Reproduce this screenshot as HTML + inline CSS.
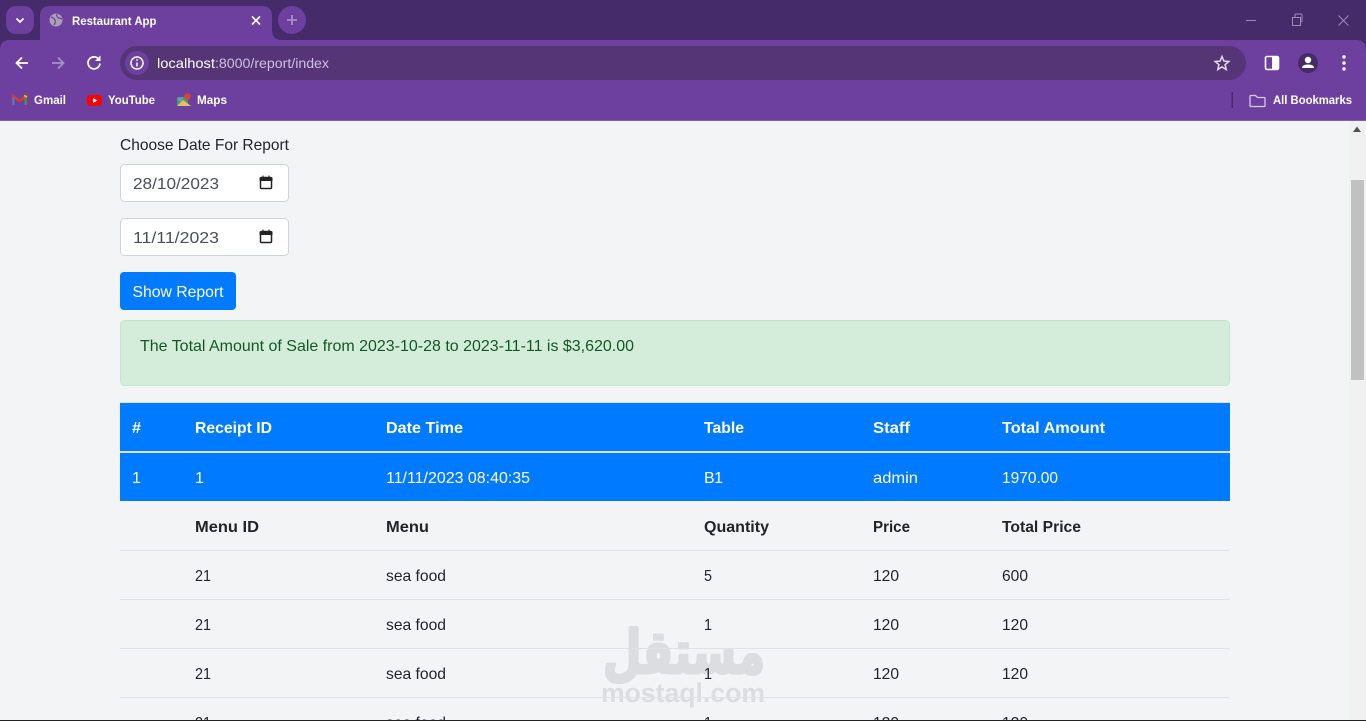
<!DOCTYPE html>
<html lang="en">
<head>
<meta charset="utf-8">
<title>Restaurant App</title>
<style>
html,body{margin:0;padding:0;width:1366px;height:721px;overflow:hidden;background:#f3f4f6}
svg{display:block;position:absolute;left:0;top:0}
text{font-family:"Liberation Sans",sans-serif;font-size:16px}
.d{fill:#212529}
.w{fill:#fff}
.b{font-weight:700}
.ui{font-size:12px;font-weight:700;fill:#fff}
</style>
</head>
<body>
<svg width="1366" height="721" viewBox="0 0 1366 721" xmlns="http://www.w3.org/2000/svg">
<!-- browser frame -->
<rect width="1366" height="121" fill="#452b69"/>
<rect y="40" width="1366" height="81" fill="#6d40a0"/>
<path d="M0 50Q0 40 10 40H30Q40 40 40 30V16Q40 6 50 6H262Q272 6 272 16V30Q272 40 282 40H1356Q1366 40 1366 50V40H0Z" fill="#452b69"/>
<path d="M40 40V16Q40 6 50 6H262Q272 6 272 16V30Q272 40 282 40Z" fill="#6d40a0"/>
<rect y="120" width="1366" height="1" fill="#8160ad"/>
<rect x="6" y="6" width="28" height="28" rx="10" fill="#6d40a0"/>
<path d="M16.500 18.500L20 22L23.500 18.500" fill="none" stroke="#fff" stroke-width="1.800"/>
<circle cx="56" cy="20" r="6.500" fill="#aaa0b8"/>
<path d="M51 17q3 1 4 3t-1 5M57 14q-1 3 2 4t3 1" fill="none" stroke="#6d40a0" stroke-width="1.200"/>
<text x="72" y="25" class="ui" textLength="84.500" lengthAdjust="spacingAndGlyphs">Restaurant App</text>
<path d="M252 16.500L260 24.500M260 16.500L252 24.500" stroke="#fff" stroke-width="1.600"/>
<circle cx="292" cy="20" r="14" fill="#6d40a0"/>
<path d="M292 15V25M287 20H297" stroke="#a78fc7" stroke-width="1.800"/>
<path d="M1246 20.500H1256" stroke="#9d8bb5" stroke-width="1"/>
<path d="M1292.500 17.500h8v8h-8zM1295 17v-2q0-1 1-1h5q1 0 1 1v6q0 1-1 1h-.5" fill="none" stroke="#9d8bb5" stroke-width="1"/>
<path d="M1338.500 15.500L1348.500 25.500M1348.500 15.500L1338.500 25.500" stroke="#9d8bb5" stroke-width="1"/>
<!-- toolbar -->
<path d="M28 63H16.500M22 57.500L16.500 63L22 68.500" fill="none" stroke="#fff" stroke-width="1.800"/>
<path d="M52 63H63.500M58 57.500L63.500 63L58 68.500" fill="none" stroke="#a78fc7" stroke-width="1.800"/>
<path d="M99 59.500A6 6 0 1 0 100 63.500" fill="none" stroke="#fff" stroke-width="1.700"/>
<path d="M100.500 55.500V61H95Z" fill="#fff"/>
<rect x="120" y="46" width="1126" height="34" rx="17" fill="#553576"/>
<circle cx="137" cy="63" r="12" fill="#6d40a0"/>
<circle cx="137" cy="63" r="6" fill="none" stroke="#fff" stroke-width="1.500"/>
<path d="M137 62.500V66.500M137 59.300V60.800" stroke="#fff" stroke-width="1.500"/>
<text x="157" y="68" style="font-size:14px" fill="#fff" textLength="58" lengthAdjust="spacingAndGlyphs">localhost</text>
<text x="215" y="68" style="font-size:14px" fill="#cdbfe0" textLength="114" lengthAdjust="spacingAndGlyphs">:8000/report/index</text>
<path d="M1222 56.500l1.900 4.600 4.900.4-3.700 3.200 1.100 4.800-4.200-2.600-4.200 2.600 1.100-4.800-3.700-3.200 4.900-.4z" fill="none" stroke="#e4dcef" stroke-width="1.500"/>
<rect x="1265.500" y="56.500" width="13" height="13" rx="1.500" fill="none" stroke="#fff" stroke-width="1.600"/>
<rect x="1272" y="56.500" width="6.500" height="13" fill="#fff"/>
<circle cx="1308" cy="63" r="10" fill="#452b69"/>
<circle cx="1308" cy="60" r="3.200" fill="#fff"/>
<path d="M1302 68q0-3.500 6-3.500t6 3.500z" fill="#fff"/>
<circle cx="1344" cy="57" r="1.700" fill="#fff"/><circle cx="1344" cy="63" r="1.700" fill="#fff"/><circle cx="1344" cy="69" r="1.700" fill="#fff"/>
<!-- bookmarks -->
<path d="M13 105V96L19.500 101L26 96V105" fill="none" stroke="#d93a2b" stroke-width="2.400"/>
<path d="M13.500 97V105" stroke="#3b82d6" stroke-width="2"/>
<path d="M25.500 97V105" stroke="#2f9e57" stroke-width="2"/>
<path d="M24 95.500l3 1.500" stroke="#e8b73a" stroke-width="1.800"/>
<text x="34" y="104" class="ui" textLength="32" lengthAdjust="spacingAndGlyphs">Gmail</text>
<rect x="87" y="95" width="15" height="11" rx="3" fill="#f00"/>
<path d="M93 98L97.500 100.500L93 103Z" fill="#fff"/>
<text x="108" y="104" class="ui" textLength="47" lengthAdjust="spacingAndGlyphs">YouTube</text>
<path d="M177 97h11v9h-11z" fill="#4c9a68"/>
<path d="M177 106l6-6 8 6z" fill="#e9c15a"/>
<path d="M177 99l4 3 2-5z" fill="#5b9fe0"/>
<circle cx="187.500" cy="96.500" r="3.200" fill="#d9432f"/>
<text x="197" y="104" class="ui" textLength="30" lengthAdjust="spacingAndGlyphs">Maps</text>
<rect x="1231.500" y="92" width="1.500" height="16" fill="#452b69"/>
<path d="M1250 96.500a1 1 0 0 1 1-1h4.500l2 2h6.500a1 1 0 0 1 1 1v7a1 1 0 0 1-1 1h-13a1 1 0 0 1-1-1z" fill="none" stroke="#d6cbe5" stroke-width="1.300"/>
<text x="1273" y="104" class="ui" textLength="79" lengthAdjust="spacingAndGlyphs">All Bookmarks</text>

<!-- page -->
<rect y="121" width="1350" height="600" fill="#f3f4f6"/>
<rect x="1349" y="121" width="17" height="600" fill="#f1f1f1"/>
<path d="M1357 126.500L1361 132H1353Z" fill="#505050"/>
<rect x="1351" y="180" width="13" height="200" fill="#c1c1c1"/>

<text x="120" y="150" class="d" textLength="169" lengthAdjust="spacingAndGlyphs">Choose Date For Report</text>

<rect x="120.500" y="164.500" width="168" height="37" rx="4" fill="#fff" stroke="#ced4da"/>
<text x="133" y="189" fill="#495057" textLength="86" lengthAdjust="spacingAndGlyphs">28/10/2023</text>
<rect x="260.500" y="177.500" width="11" height="11" rx="1" fill="none" stroke="#222" stroke-width="1.500"/>
<path d="M260 178h12v2.500h-12zM263 175.500v2M269 175.500v2" fill="#222" stroke="#222"/>

<rect x="120.500" y="218.500" width="168" height="37" rx="4" fill="#fff" stroke="#ced4da"/>
<text x="133" y="243" fill="#495057" textLength="86" lengthAdjust="spacingAndGlyphs">11/11/2023</text>
<rect x="260.500" y="231.500" width="11" height="11" rx="1" fill="none" stroke="#222" stroke-width="1.500"/>
<path d="M260 232h12v2.500h-12zM263 229.500v2M269 229.500v2" fill="#222" stroke="#222"/>

<rect x="120" y="272" width="116" height="38" rx="4" fill="#007bff"/>
<text x="132.500" y="297" class="w" textLength="91" lengthAdjust="spacingAndGlyphs">Show Report</text>

<rect x="120.500" y="320.500" width="1109" height="65" rx="4" fill="#d4edda" stroke="#c3e6cb"/>
<text x="140" y="351" fill="#155724" textLength="494" lengthAdjust="spacingAndGlyphs">The Total Amount of Sale from 2023-10-28 to 2023-11-11 is $3,620.00</text>

<!-- watermark -->
<text x="765" y="673" style="font-family:'DejaVu Sans',sans-serif;font-size:60px;font-weight:700" fill="#dcdde1" stroke="#dcdde1" stroke-width="3" stroke-linejoin="round" direction="rtl" textLength="162" lengthAdjust="spacingAndGlyphs">مستقل</text>
<text x="601" y="702" style="font-size:27px;font-weight:700" fill="#dcdde1" textLength="164" lengthAdjust="spacingAndGlyphs">mostaql.com</text>

<!-- table -->
<rect x="120" y="402" width="1110" height="1" fill="#dee2e6"/>
<rect x="120" y="403" width="1110" height="48" fill="#007bff"/>
<rect x="120" y="451" width="1110" height="2" fill="#dee2e6"/>
<rect x="120" y="453" width="1110" height="48" fill="#007bff"/>
<rect x="120" y="550" width="1110" height="1" fill="#dee2e6"/>
<rect x="120" y="599" width="1110" height="1" fill="#dee2e6"/>
<rect x="120" y="648" width="1110" height="1" fill="#dee2e6"/>
<rect x="120" y="697" width="1110" height="1" fill="#dee2e6"/>

<text x="132" y="433" class="w b" textLength="9" lengthAdjust="spacingAndGlyphs">#</text>
<text x="195" y="433" class="w b" textLength="77" lengthAdjust="spacingAndGlyphs">Receipt ID</text>
<text x="386" y="433" class="w b" textLength="77" lengthAdjust="spacingAndGlyphs">Date Time</text>
<text x="704" y="433" class="w b" textLength="40" lengthAdjust="spacingAndGlyphs">Table</text>
<text x="873" y="433" class="w b" textLength="37" lengthAdjust="spacingAndGlyphs">Staff</text>
<text x="1002" y="433" class="w b" textLength="103" lengthAdjust="spacingAndGlyphs">Total Amount</text>

<text x="132" y="483" class="w" textLength="9" lengthAdjust="spacingAndGlyphs">1</text>
<text x="195" y="483" class="w" textLength="9" lengthAdjust="spacingAndGlyphs">1</text>
<text x="386" y="483" class="w" textLength="144" lengthAdjust="spacingAndGlyphs">11/11/2023 08:40:35</text>
<text x="704" y="483" class="w" textLength="19">B1</text>
<text x="873" y="483" class="w" textLength="45" lengthAdjust="spacingAndGlyphs">admin</text>
<text x="1002" y="483" class="w" textLength="56" lengthAdjust="spacingAndGlyphs">1970.00</text>

<text x="195" y="532" class="d b" textLength="64" lengthAdjust="spacingAndGlyphs">Menu ID</text>
<text x="386" y="532" class="d b" textLength="43" lengthAdjust="spacingAndGlyphs">Menu</text>
<text x="704" y="532" class="d b" textLength="65" lengthAdjust="spacingAndGlyphs">Quantity</text>
<text x="873" y="532" class="d b" textLength="37" lengthAdjust="spacingAndGlyphs">Price</text>
<text x="1002" y="532" class="d b" textLength="79" lengthAdjust="spacingAndGlyphs">Total Price</text>

<text x="195" y="581" class="d" textLength="16" lengthAdjust="spacingAndGlyphs">21</text>
<text x="386" y="581" class="d" textLength="60" lengthAdjust="spacingAndGlyphs">sea food</text>
<text x="704" y="581" class="d" textLength="8" lengthAdjust="spacingAndGlyphs">5</text>
<text x="873" y="581" class="d" textLength="26" lengthAdjust="spacingAndGlyphs">120</text>
<text x="1002" y="581" class="d" textLength="26" lengthAdjust="spacingAndGlyphs">600</text>

<text x="195" y="630" class="d" textLength="16" lengthAdjust="spacingAndGlyphs">21</text>
<text x="386" y="630" class="d" textLength="60" lengthAdjust="spacingAndGlyphs">sea food</text>
<text x="704" y="630" class="d" textLength="8" lengthAdjust="spacingAndGlyphs">1</text>
<text x="873" y="630" class="d" textLength="26" lengthAdjust="spacingAndGlyphs">120</text>
<text x="1002" y="630" class="d" textLength="26" lengthAdjust="spacingAndGlyphs">120</text>

<text x="195" y="679" class="d" textLength="16" lengthAdjust="spacingAndGlyphs">21</text>
<text x="386" y="679" class="d" textLength="60" lengthAdjust="spacingAndGlyphs">sea food</text>
<text x="704" y="679" class="d" textLength="8" lengthAdjust="spacingAndGlyphs">1</text>
<text x="873" y="679" class="d" textLength="26" lengthAdjust="spacingAndGlyphs">120</text>
<text x="1002" y="679" class="d" textLength="26" lengthAdjust="spacingAndGlyphs">120</text>

<text x="195" y="728" class="d" textLength="16" lengthAdjust="spacingAndGlyphs">21</text>
<text x="386" y="728" class="d" textLength="60" lengthAdjust="spacingAndGlyphs">sea food</text>
<text x="704" y="728" class="d" textLength="8" lengthAdjust="spacingAndGlyphs">1</text>
<text x="873" y="728" class="d" textLength="26" lengthAdjust="spacingAndGlyphs">120</text>
<text x="1002" y="728" class="d" textLength="26" lengthAdjust="spacingAndGlyphs">120</text>

<rect y="720" width="1366" height="1" fill="#222"/>
</svg>
</body>
</html>
